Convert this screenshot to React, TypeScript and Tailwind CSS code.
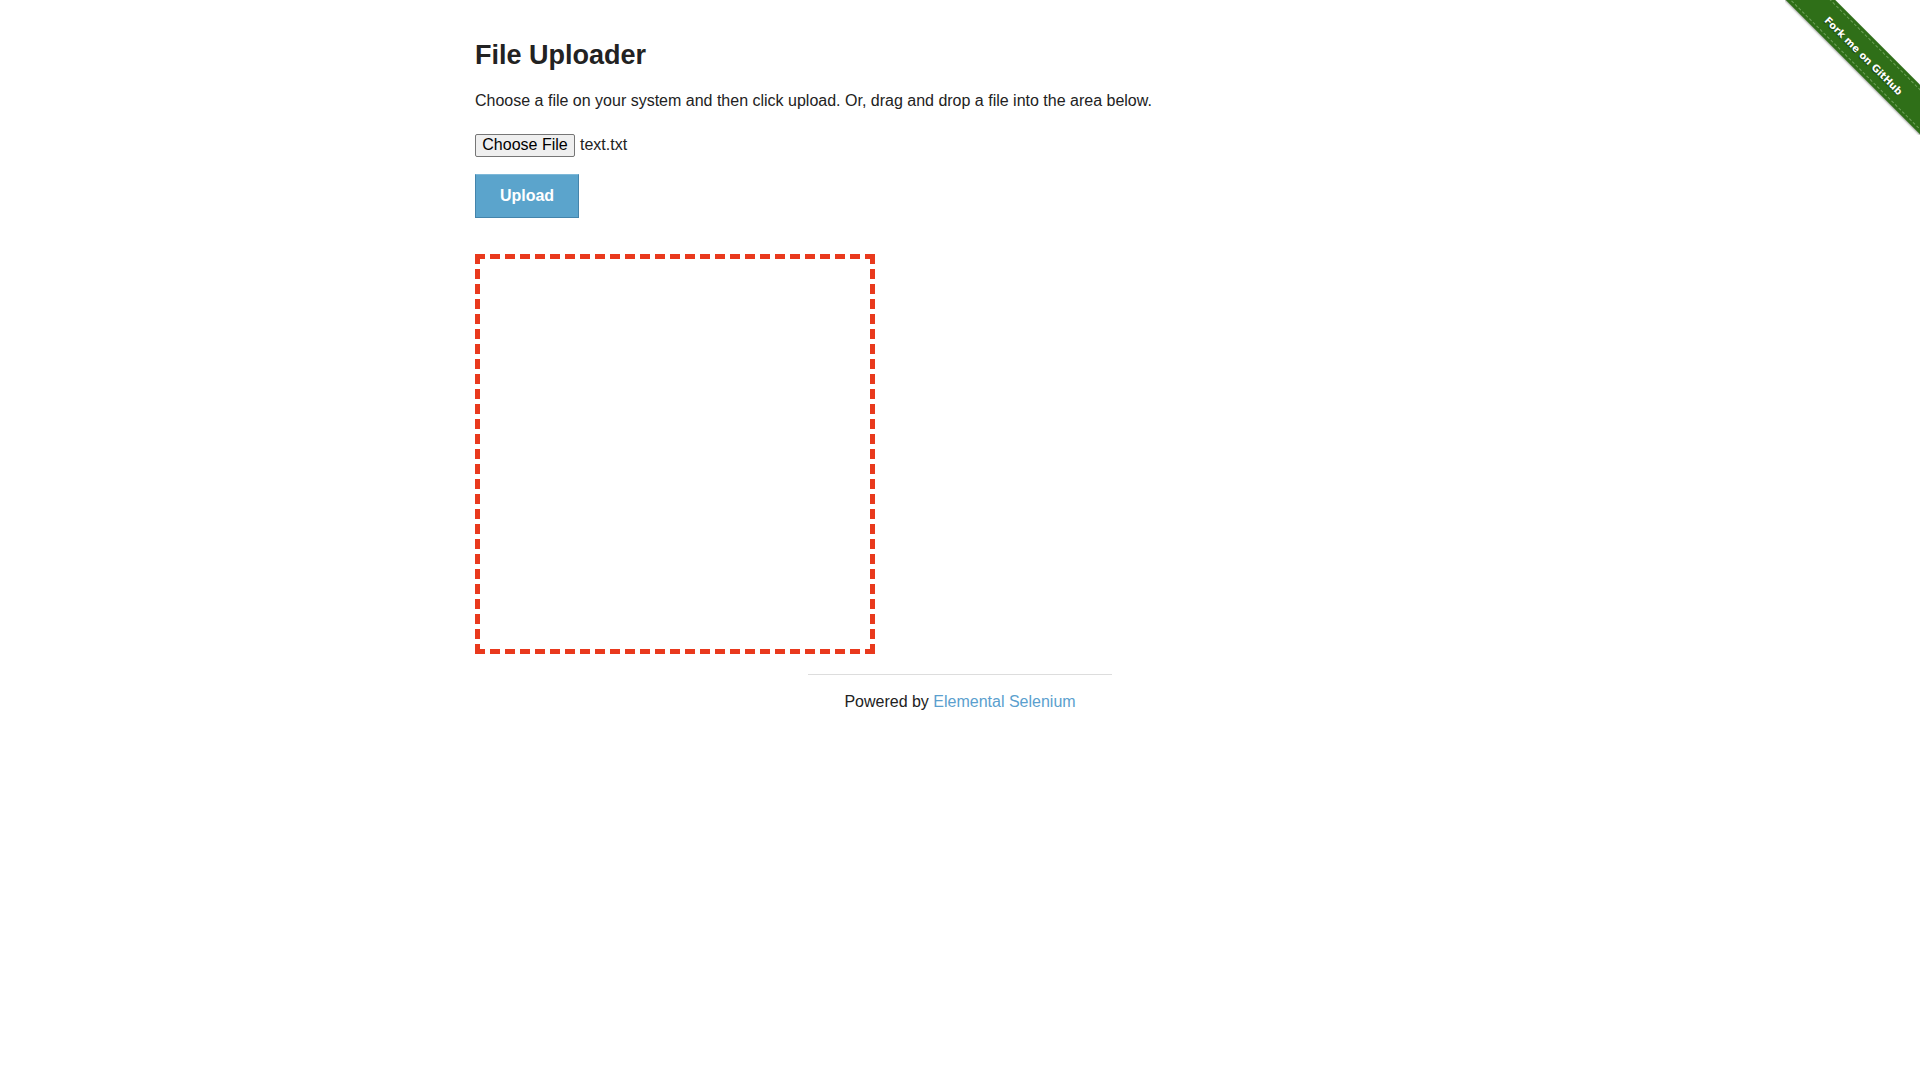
import React from 'react';

const ForkRibbon: React.FC = () => (
    <div className="absolute top-0 right-0 w-[135px] h-[135px] overflow-hidden pointer-events-none">
        <div className="absolute left-[-20px] top-[37px] w-[200px] h-[35px] rotate-45 bg-[#2f6f18] flex items-center justify-center shadow-[0_1px_2px_rgba(0,0,0,0.35)]">
            <div className="w-full h-[29px] border-y border-dashed border-[#6fa25a] flex items-center justify-center">
                <span className="translate-y-[2px] text-white text-[10px] font-bold [text-shadow:0_1px_1px_rgba(0,0,0,0.5)] font-['DejaVu_Sans',sans-serif]">
                    Fork me on GitHub
                </span>
            </div>
        </div>
    </div>
);

export default function App() {
    return (
        <div className="relative min-h-[1080px] bg-white text-[#222] font-['Liberation_Sans',Arial,sans-serif]">
            <ForkRibbon />

            {/* main content row */}
            <div className="w-[1000px] mx-auto px-[15px] pt-[36px]">
                <h3 className="text-[27px] leading-[38px] font-bold text-[#222]">File Uploader</h3>
                <p className="mt-[14px] text-[16px] leading-[25.6px]">
                    Choose a file on your system and then click upload. Or, drag and drop a file into the area below.
                </p>

                {/* file input (fake, keeps chosen file name) */}
                <div className="mt-[20px] flex items-center h-[23px]">
                    <div className="h-[23px] w-[100px] flex items-center justify-center bg-[#efefef] border border-[#767676] rounded-[2px] text-[16px] text-black">
                        Choose File
                    </div>
                    <span className="ml-[5px] text-[16px] text-[#222]">text.txt</span>
                </div>

                <button className="mt-[17px] w-[104px] h-[44px] flex items-center justify-center bg-[#5ba4cc] border border-[#4484ab] border-t-[#7db8d8] text-white text-[16px] font-bold">
                    Upload
                </button>

                {/* drop zone */}
                <div className="mt-[36px] w-[400px] h-[400px] border-[5px] border-dashed border-[#e9391d]" />
            </div>

            {/* footer */}
            <div className="w-[1000px] mx-auto">
                <div className="w-[333.33px] mx-auto px-[15px] mt-[20px]">
                    <hr className="border-0 border-t border-[#ddd]" />
                    <div className="mt-[14px] text-center text-[16px] leading-[25.6px] text-[#222]">
                        Powered by <a href="#" className="text-[#5b9fce]">Elemental Selenium</a>
                    </div>
                </div>
            </div>
        </div>
    );
}
